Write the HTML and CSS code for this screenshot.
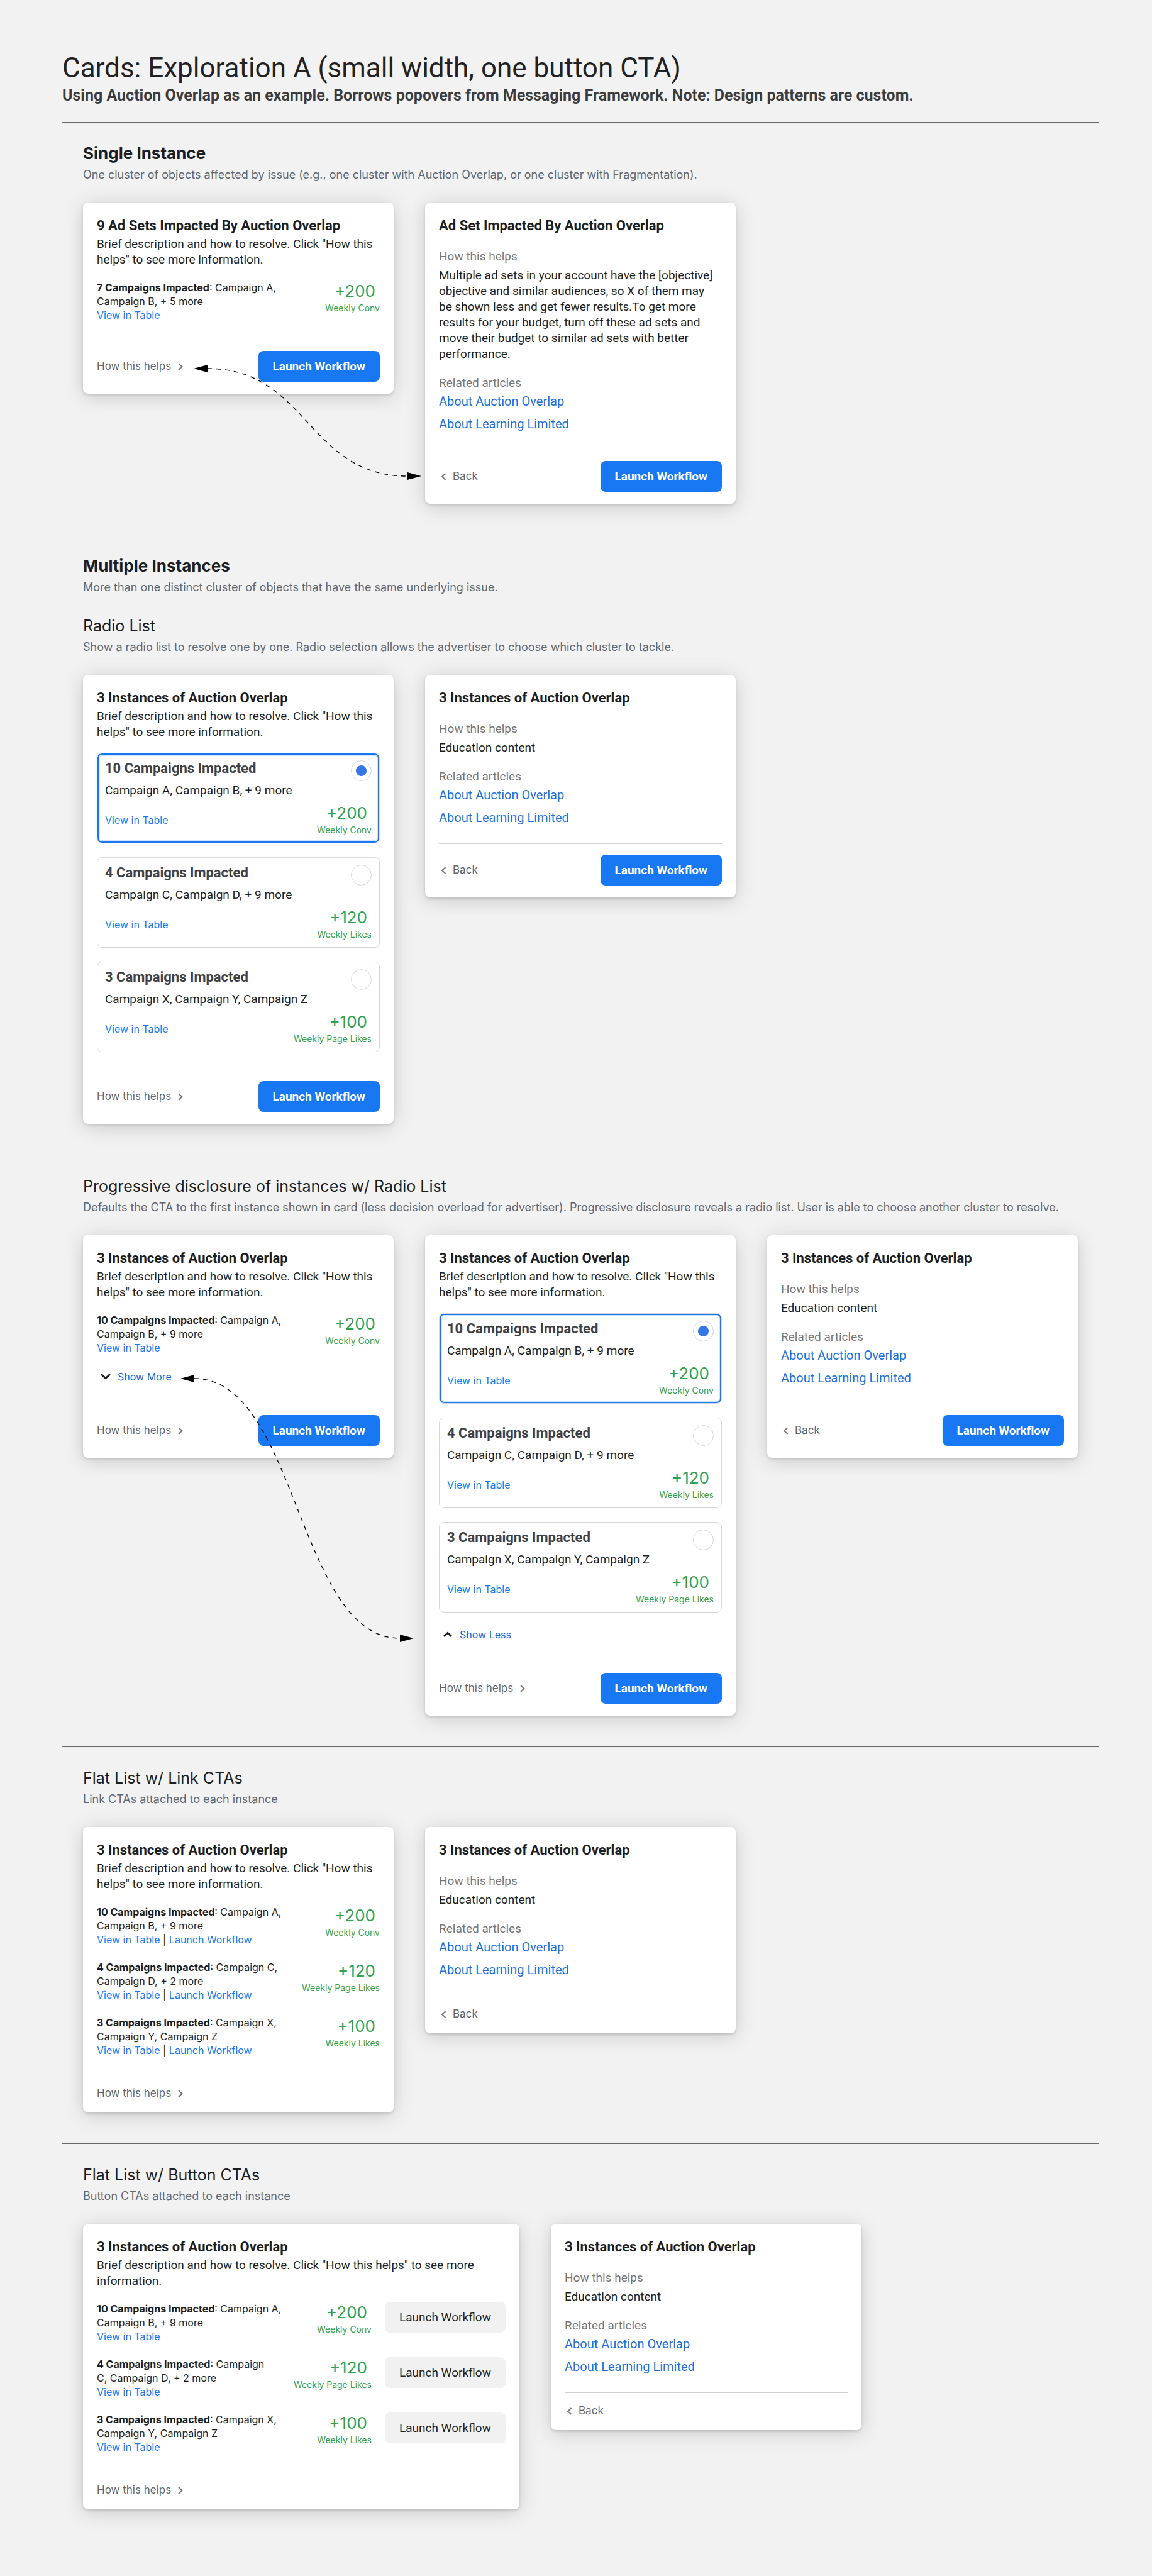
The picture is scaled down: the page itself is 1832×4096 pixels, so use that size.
FILE: index.html
```html
<!DOCTYPE html>
<html lang="en">
<head>
<meta charset="utf-8">
<meta name="viewport" content="width=device-width, initial-scale=1">
<title>Cards: Exploration A</title>
<link rel="stylesheet" href="styles.css">
</head>
<body>
<svg class="sprite" aria-hidden="true">
  <symbol id="chev-right" viewBox="0 0 10 14"><path d="M2 2l5.500 5-5.500 5" fill="none" stroke="currentColor" stroke-width="2"/></symbol>
  <symbol id="chev-left" viewBox="0 0 10 14"><path d="M8.500 2L3 7l5.500 5" fill="none" stroke="currentColor" stroke-width="2"/></symbol>
  <symbol id="chev-down" viewBox="0 0 16 10"><path d="M2 2l6 5.500L14 2" fill="none" stroke="currentColor" stroke-width="3" stroke-linecap="round"/></symbol>
  <symbol id="chev-up" viewBox="0 0 16 10"><path d="M2 8l6-5.500L14 8" fill="none" stroke="currentColor" stroke-width="3"/></symbol>
</svg>

<main class="page">
  <header class="page-head">
    <h1>Cards: Exploration A (small width, one button CTA)</h1>
    <p>Using Auction Overlap as an example. Borrows popovers from Messaging Framework. Note: Design patterns are custom.</p>
  </header>

  <section class="section">
    <h2 class="heading strong">Single Instance</h2>
    <p class="note">One cluster of objects affected by issue (e.g., one cluster with Auction Overlap, or one cluster with Fragmentation).</p>
    <div class="cards">
      <article class="card">
        <h3 class="card-title">9 Ad Sets Impacted By Auction Overlap</h3>
        <p class="card-text">Brief description and how to resolve. Click "How this helps" to see more information.</p>
        <ul class="rows">
          <li class="row">
            <p class="row-text"><b>7 Campaigns Impacted</b>: Campaign A,<br>Campaign B, + 5 more<br><a href="#">View in Table</a></p>
            <p class="stat"><span class="stat-num">+200</span><span class="stat-unit">Weekly Conv</span></p>
          </li>
        </ul>
        <footer class="card-foot">
          <a class="foot-link" href="#">How this helps <svg class="chev"><use href="#chev-right"/></svg></a>
          <button class="btn primary" type="button">Launch Workflow</button>
        </footer>
      </article>
      <article class="card">
        <h3 class="card-title">Ad Set Impacted By Auction Overlap</h3>
        <div class="info">
          <h4>How this helps</h4>
          <p>Multiple ad sets in your account have the [objective] objective and similar audiences, so X of them may be shown less and get fewer results.To get more results for your budget, turn off these ad sets and move their budget to similar ad sets with better performance.</p>
          <h4>Related articles</h4>
          <ul class="articles">
            <li><a href="#">About Auction Overlap</a></li>
            <li><a href="#">About Learning Limited</a></li>
          </ul>
        </div>
        <footer class="card-foot">
          <a class="foot-link back" href="#"><svg class="chev"><use href="#chev-left"/></svg> Back</a>
          <button class="btn primary" type="button">Launch Workflow</button>
        </footer>
      </article>
      <svg class="connector" width="560" height="480" aria-hidden="true">
        <path class="dash" d="M198 264C357 264 357 435 516 435"/>
        <path d="M176 264l22-6v12zM538 435l-22-6v12z"/>
      </svg>
    </div>
  </section>

  <section class="section">
    <h2 class="heading strong">Multiple Instances</h2>
    <p class="note">More than one distinct cluster of objects that have the same underlying issue.</p>
    <h3 class="heading next">Radio List</h3>
    <p class="note">Show a radio list to resolve one by one. Radio selection allows the advertiser to choose which cluster to tackle.</p>
    <div class="cards">
      <article class="card">
        <h3 class="card-title">3 Instances of Auction Overlap</h3>
        <p class="card-text">Brief description and how to resolve. Click "How this helps" to see more information.</p>
        <div class="options">
          <div class="option selected">
            <div class="option-top">
              <label for="a1"><b>10 Campaigns Impacted</b><span>Campaign A, Campaign B, + 9 more</span></label>
              <input type="radio" id="a1" name="a" checked>
            </div>
            <div class="option-bottom">
              <a href="#">View in Table</a>
              <p class="stat"><span class="stat-num">+200</span><span class="stat-unit">Weekly Conv</span></p>
            </div>
          </div>
          <div class="option">
            <div class="option-top">
              <label for="a2"><b>4 Campaigns Impacted</b><span>Campaign C, Campaign D, + 9 more</span></label>
              <input type="radio" id="a2" name="a">
            </div>
            <div class="option-bottom">
              <a href="#">View in Table</a>
              <p class="stat"><span class="stat-num">+120</span><span class="stat-unit">Weekly Likes</span></p>
            </div>
          </div>
          <div class="option">
            <div class="option-top">
              <label for="a3"><b>3 Campaigns Impacted</b><span>Campaign X, Campaign Y, Campaign Z</span></label>
              <input type="radio" id="a3" name="a">
            </div>
            <div class="option-bottom">
              <a href="#">View in Table</a>
              <p class="stat"><span class="stat-num">+100</span><span class="stat-unit">Weekly Page Likes</span></p>
            </div>
          </div>
        </div>
        <footer class="card-foot">
          <a class="foot-link" href="#">How this helps <svg class="chev"><use href="#chev-right"/></svg></a>
          <button class="btn primary" type="button">Launch Workflow</button>
        </footer>
      </article>
      <article class="card">
        <h3 class="card-title">3 Instances of Auction Overlap</h3>
        <div class="info">
          <h4>How this helps</h4>
          <p>Education content</p>
          <h4>Related articles</h4>
          <ul class="articles">
            <li><a href="#">About Auction Overlap</a></li>
            <li><a href="#">About Learning Limited</a></li>
          </ul>
        </div>
        <footer class="card-foot">
          <a class="foot-link back" href="#"><svg class="chev"><use href="#chev-left"/></svg> Back</a>
          <button class="btn primary" type="button">Launch Workflow</button>
        </footer>
      </article>
    </div>
  </section>

  <section class="section">
    <h3 class="heading">Progressive disclosure of instances w/ Radio List</h3>
    <p class="note">Defaults the CTA to the first instance shown in card (less decision overload for advertiser). Progressive disclosure reveals a radio list. User is able to choose another cluster to resolve.</p>
    <div class="cards">
      <article class="card">
        <h3 class="card-title">3 Instances of Auction Overlap</h3>
        <p class="card-text">Brief description and how to resolve. Click "How this helps" to see more information.</p>
        <ul class="rows">
          <li class="row">
            <p class="row-text"><b>10 Campaigns Impacted</b>: Campaign A,<br>Campaign B, + 9 more<br><a href="#">View in Table</a></p>
            <p class="stat"><span class="stat-num">+200</span><span class="stat-unit">Weekly Conv</span></p>
          </li>
        </ul>
        <button class="toggle" type="button"><svg class="caret"><use href="#chev-down"/></svg>Show More</button>
        <footer class="card-foot">
          <a class="foot-link" href="#">How this helps <svg class="chev"><use href="#chev-right"/></svg></a>
          <button class="btn primary" type="button">Launch Workflow</button>
        </footer>
      </article>
      <article class="card">
        <h3 class="card-title">3 Instances of Auction Overlap</h3>
        <p class="card-text">Brief description and how to resolve. Click "How this helps" to see more information.</p>
        <div class="options">
          <div class="option selected">
            <div class="option-top">
              <label for="b1"><b>10 Campaigns Impacted</b><span>Campaign A, Campaign B, + 9 more</span></label>
              <input type="radio" id="b1" name="b" checked>
            </div>
            <div class="option-bottom">
              <a href="#">View in Table</a>
              <p class="stat"><span class="stat-num">+200</span><span class="stat-unit">Weekly Conv</span></p>
            </div>
          </div>
          <div class="option">
            <div class="option-top">
              <label for="b2"><b>4 Campaigns Impacted</b><span>Campaign C, Campaign D, + 9 more</span></label>
              <input type="radio" id="b2" name="b">
            </div>
            <div class="option-bottom">
              <a href="#">View in Table</a>
              <p class="stat"><span class="stat-num">+120</span><span class="stat-unit">Weekly Likes</span></p>
            </div>
          </div>
          <div class="option">
            <div class="option-top">
              <label for="b3"><b>3 Campaigns Impacted</b><span>Campaign X, Campaign Y, Campaign Z</span></label>
              <input type="radio" id="b3" name="b">
            </div>
            <div class="option-bottom">
              <a href="#">View in Table</a>
              <p class="stat"><span class="stat-num">+100</span><span class="stat-unit">Weekly Page Likes</span></p>
            </div>
          </div>
        </div>
        <button class="toggle" type="button"><svg class="caret"><use href="#chev-up"/></svg>Show Less</button>
        <footer class="card-foot">
          <a class="foot-link" href="#">How this helps <svg class="chev"><use href="#chev-right"/></svg></a>
          <button class="btn primary" type="button">Launch Workflow</button>
        </footer>
      </article>
      <article class="card">
        <h3 class="card-title">3 Instances of Auction Overlap</h3>
        <div class="info">
          <h4>How this helps</h4>
          <p>Education content</p>
          <h4>Related articles</h4>
          <ul class="articles">
            <li><a href="#">About Auction Overlap</a></li>
            <li><a href="#">About Learning Limited</a></li>
          </ul>
        </div>
        <footer class="card-foot">
          <a class="foot-link back" href="#"><svg class="chev"><use href="#chev-left"/></svg> Back</a>
          <button class="btn primary" type="button">Launch Workflow</button>
        </footer>
      </article>
      <svg class="connector" width="560" height="680" aria-hidden="true">
        <path class="dash" d="M177 228C341 228 341 641 504 641"/>
        <path d="M155 228l22-6v12zM526 641l-22-6v12z"/>
      </svg>
    </div>
  </section>

  <section class="section">
    <h3 class="heading">Flat List w/ Link CTAs</h3>
    <p class="note">Link CTAs attached to each instance</p>
    <div class="cards">
      <article class="card">
        <h3 class="card-title">3 Instances of Auction Overlap</h3>
        <p class="card-text">Brief description and how to resolve. Click "How this helps" to see more information.</p>
        <ul class="rows">
          <li class="row">
            <p class="row-text"><b>10 Campaigns Impacted</b>: Campaign A,<br>Campaign B, + 9 more<br><a href="#">View in Table</a> | <a href="#">Launch Workflow</a></p>
            <p class="stat"><span class="stat-num">+200</span><span class="stat-unit">Weekly Conv</span></p>
          </li>
          <li class="row">
            <p class="row-text"><b>4 Campaigns Impacted</b>: Campaign C,<br>Campaign D, + 2 more<br><a href="#">View in Table</a> | <a href="#">Launch Workflow</a></p>
            <p class="stat"><span class="stat-num">+120</span><span class="stat-unit">Weekly Page Likes</span></p>
          </li>
          <li class="row">
            <p class="row-text"><b>3 Campaigns Impacted</b>: Campaign X,<br>Campaign Y, Campaign Z<br><a href="#">View in Table</a> | <a href="#">Launch Workflow</a></p>
            <p class="stat"><span class="stat-num">+100</span><span class="stat-unit">Weekly Likes</span></p>
          </li>
        </ul>
        <footer class="card-foot">
          <a class="foot-link" href="#">How this helps <svg class="chev"><use href="#chev-right"/></svg></a>
        </footer>
      </article>
      <article class="card">
        <h3 class="card-title">3 Instances of Auction Overlap</h3>
        <div class="info">
          <h4>How this helps</h4>
          <p>Education content</p>
          <h4>Related articles</h4>
          <ul class="articles">
            <li><a href="#">About Auction Overlap</a></li>
            <li><a href="#">About Learning Limited</a></li>
          </ul>
        </div>
        <footer class="card-foot">
          <a class="foot-link back" href="#"><svg class="chev"><use href="#chev-left"/></svg> Back</a>
        </footer>
      </article>
    </div>
  </section>

  <section class="section">
    <h3 class="heading">Flat List w/ Button CTAs</h3>
    <p class="note">Button CTAs attached to each instance</p>
    <div class="cards wide-first">
      <article class="card">
        <h3 class="card-title">3 Instances of Auction Overlap</h3>
        <p class="card-text">Brief description and how to resolve. Click "How this helps" to see more information.</p>
        <ul class="rows">
          <li class="row">
            <p class="row-text"><b>10 Campaigns Impacted</b>: Campaign A,<br>Campaign B, + 9 more<br><a href="#">View in Table</a></p>
            <p class="stat"><span class="stat-num">+200</span><span class="stat-unit">Weekly Conv</span></p>
            <button class="btn" type="button">Launch Workflow</button>
          </li>
          <li class="row">
            <p class="row-text"><b>4 Campaigns Impacted</b>: Campaign<br>C, Campaign D, + 2 more<br><a href="#">View in Table</a></p>
            <p class="stat"><span class="stat-num">+120</span><span class="stat-unit">Weekly Page Likes</span></p>
            <button class="btn" type="button">Launch Workflow</button>
          </li>
          <li class="row">
            <p class="row-text"><b>3 Campaigns Impacted</b>: Campaign X,<br>Campaign Y, Campaign Z<br><a href="#">View in Table</a></p>
            <p class="stat"><span class="stat-num">+100</span><span class="stat-unit">Weekly Likes</span></p>
            <button class="btn" type="button">Launch Workflow</button>
          </li>
        </ul>
        <footer class="card-foot">
          <a class="foot-link" href="#">How this helps <svg class="chev"><use href="#chev-right"/></svg></a>
        </footer>
      </article>
      <article class="card">
        <h3 class="card-title">3 Instances of Auction Overlap</h3>
        <div class="info">
          <h4>How this helps</h4>
          <p>Education content</p>
          <h4>Related articles</h4>
          <ul class="articles">
            <li><a href="#">About Auction Overlap</a></li>
            <li><a href="#">About Learning Limited</a></li>
          </ul>
        </div>
        <footer class="card-foot">
          <a class="foot-link back" href="#"><svg class="chev"><use href="#chev-left"/></svg> Back</a>
        </footer>
      </article>
    </div>
  </section>
</main>
</body>
</html>
```
FILE: styles.css
```css
* { box-sizing: border-box; }

body {
  margin: 0;
  background: #f2f2f2;
  color: #1c1e21;
  font: 16px/22px Inter, "Liberation Sans", sans-serif;
}

h1, h2, h3, h4, p, ul { margin: 0; padding: 0; font-weight: 400; }
ul { list-style: none; }
a { color: #1877f2; text-decoration: none; }
.sprite { display: none; }

.page { padding: 82px 85px 58px 99px; }

.page-head { padding-bottom: 28px; font-family: Roboto, sans-serif; }
.page-head h1 { color: #222; font-size: 44px; line-height: 52px; }
.page-head p { margin-top: 4px; color: #3c3c3c; font-size: 25px; line-height: 28px; font-weight: 700; }

/* Sections */
.section { padding: 33px 33px 49px; border-top: 1px solid #666865; }
.heading { font-size: 25px; line-height: 32px; }
.heading.strong { font-size: 26px; font-weight: 700; }
.heading.next { margin-top: 33px; }
.note { margin-top: 6px; color: #606770; font-size: 18px; line-height: 24px; }

.cards {
  position: relative;
  display: grid;
  grid-template-columns: repeat(3, minmax(0, 1fr));
  gap: 50px;
  align-items: start;
  margin-top: 32px;
}
.cards.wide-first { grid-template-columns: minmax(0, 694px) minmax(0, 494px); }

.connector { position: absolute; left: 0; top: 0; pointer-events: none; }
.connector .dash { fill: none; stroke: #000; stroke-width: 1.4; stroke-dasharray: 7 7; }

/* Card */
.card {
  padding: 23px 22px 0;
  border-radius: 8px;
  background: #fff;
  box-shadow: 0 2px 4px rgba(0, 0, 0, .14), 0 5px 32px rgba(0, 0, 0, .17);
}
.card-title { font: 700 22px/28px Roboto, sans-serif; }
.card-text { margin-top: 2px; font: 19px/25px Roboto, sans-serif; }

.card-foot {
  display: flex;
  justify-content: space-between;
  align-items: center;
  margin-top: 28px;
  padding: 17px 0 19px;
  border-top: 1px solid #d0d2d5;
}
.foot-link { display: flex; align-items: center; gap: 10px; color: #606770; font-size: 17px; line-height: 23px; }
.foot-link.back { padding-left: 2px; }
.chev { width: 10px; height: 14px; color: #777; }

.btn {
  height: 49px;
  padding: 0 23px;
  border: 0;
  border-radius: 8px;
  background: #f1f1f1;
  color: #1c1e21;
  font: 400 19px/25px Roboto, sans-serif;
  white-space: nowrap;
}
.btn.primary { background: #1877f2; color: #fff; font-weight: 700; }

/* Campaign rows */
.rows { display: grid; gap: 22px; margin-top: 21px; }
.row { display: flex; align-items: flex-start; gap: 21px; }
.row-text { flex: 1; white-space: nowrap; }
.stat { display: grid; gap: 1px; color: #31a24c; text-align: right; }
.row .stat { padding-top: 1px; }
.stat-num { padding-right: 7px; font-size: 26px; line-height: 32px; }
.stat-unit { font-size: 14px; line-height: 20px; }

/* Radio options */
.options { display: grid; gap: 22px; margin-top: 21px; }
.option { padding: 10px 12px; border: 1px solid #d5d7da; border-radius: 8px; }
.option.selected { box-shadow: inset 0 0 0 2px #1877f2, inset 0 0 0 4px #cfe3fb; }
.option-top { display: flex; justify-content: space-between; align-items: flex-start; }
.option-top label { font: 19px/25px Roboto, sans-serif; }
.option-top b, .option-top span { display: block; }
.option-top b { color: #3e4042; font-size: 22px; line-height: 28px; }
.option-top span { margin-top: 8px; }
.option-bottom { display: flex; justify-content: space-between; align-items: center; margin-top: 8px; }

input[type="radio"] {
  appearance: none;
  width: 33px;
  height: 33px;
  margin: 1px 0 0;
  border: 1px solid #d3d6da;
  border-radius: 50%;
  background: #fff;
}
input[type="radio"]:checked { background: radial-gradient(circle, #3578e5 8px, #fff 9px); }

/* Show more / less */
.toggle {
  display: flex;
  align-items: center;
  gap: 11px;
  margin-top: 21px;
  padding: 0 0 1px 6px;
  border: 0;
  background: none;
  color: #1763cf;
  font: 16px/28px Inter, sans-serif;
}
.caret { width: 16px; height: 10px; color: #1c1e21; }

/* Education content */
.info { font: 19px/25px Roboto, sans-serif; }
.info h4 { margin-top: 21px; color: #777; }
.info h4:first-child { margin-top: 22px; }
.info p, .articles { margin-top: 5px; }
.info p { padding-right: 8px; }
.articles { display: grid; gap: 11px; }
.articles a { display: block; color: #216fdb; font-size: 20px; }
```
